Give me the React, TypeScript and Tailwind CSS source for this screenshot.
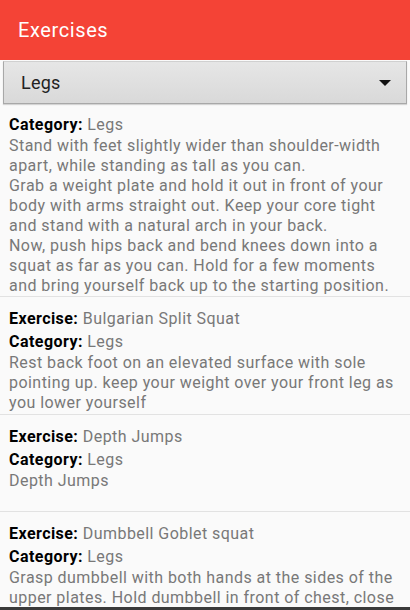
import React from "react";

type Item = { exercise?: string; category: string; desc: string[]; pad: string };

const items: Item[] = [
  {
    category: "Legs",
    pad: "pt-[8px] pb-[0px]",
    desc: [
      "Stand with feet slightly wider than shoulder-width apart, while standing as tall as you can.",
      "Grab a weight plate and hold it out in front of your body with arms straight out. Keep your core tight and stand with a natural arch in your back.",
      "Now, push hips back and bend knees down into a squat as far as you can. Hold for a few moments and bring yourself back up to the starting position.",
    ],
  },
  {
    exercise: "Bulgarian Split Squat",
    category: "Legs",
    pad: "pt-[10px] pb-[1px]",
    desc: [
      "Rest back foot on an elevated surface with sole pointing up. keep your weight over your front leg as you lower yourself",
    ],
  },
  {
    exercise: "Depth Jumps",
    category: "Legs",
    pad: "pt-[10px] pb-[0px]",
    desc: ["Depth Jumps", "\u00a0"],
  },
  {
    exercise: "Dumbbell Goblet squat",
    category: "Legs",
    pad: "pt-[10px] pb-[1px]",
    desc: [
      "Grasp dumbbell with both hands at the sides of the upper plates. Hold dumbbell in front of chest, close to body. Position feet slightly wider than shoulder width, toes pointed out slightly.",
    ],
  },
];

function Row({ item }: { item: Item }) {
  return (
    <div className={`${item.pad} pl-[9px] pr-[6px] border-b border-[#e2e2e2] tracking-[0.45px]`}>
      {item.exercise && (
        <div className="text-[16px] leading-[23px]">
          <span className="font-bold text-black">Exercise:</span>{" "}
          <span className="text-[#787878]">{item.exercise}</span>
        </div>
      )}
      <div className="text-[16px] leading-[23px]">
        <span className="font-bold text-black">Category:</span>{" "}
        <span className="text-[#787878]">{item.category}</span>
      </div>
      <div className="text-[16px] leading-[20px] text-[#787878]">
        {item.desc.map((d, i) => (
          <div key={i}>{d}</div>
        ))}
      </div>
    </div>
  );
}

export default function App() {
  return (
    <div
      className="w-[410px] h-[610px] flex flex-col bg-[#fafafa] overflow-hidden"
      style={{ fontFamily: "Roboto, 'Noto Sans', sans-serif" }}
    >
      <div className="h-[60px] shrink-0 bg-[#f44336] flex items-center pl-[18px]">
        <span className="text-white text-[20px] leading-none tracking-[0.6px]">Exercises</span>
      </div>
      <div className="shrink-0 pt-[1px] px-[3px] pb-[1px]">
        <div className="h-[43px] flex items-center justify-between pl-[17px] pr-[15px] border border-[#a8a8a8] border-t-[#d0d0d0] bg-gradient-to-b from-[#e6e6e6] to-[#d9d9d9] shadow-[0_1px_1px_rgba(0,0,0,0.15)]">
          <span className="text-[18px] text-[#222] tracking-[0.2px]">Legs</span>
          <svg width="12" height="6" viewBox="0 0 12 6">
            <polygon points="0,0 12,0 6,6" fill="#111" />
          </svg>
        </div>
      </div>
      <div className="flex-1 overflow-hidden">
        {items.map((it, i) => (
          <Row key={i} item={it} />
        ))}
      </div>
      <div className="h-[3px] shrink-0 bg-[#3a3a3a]" />
    </div>
  );
}
